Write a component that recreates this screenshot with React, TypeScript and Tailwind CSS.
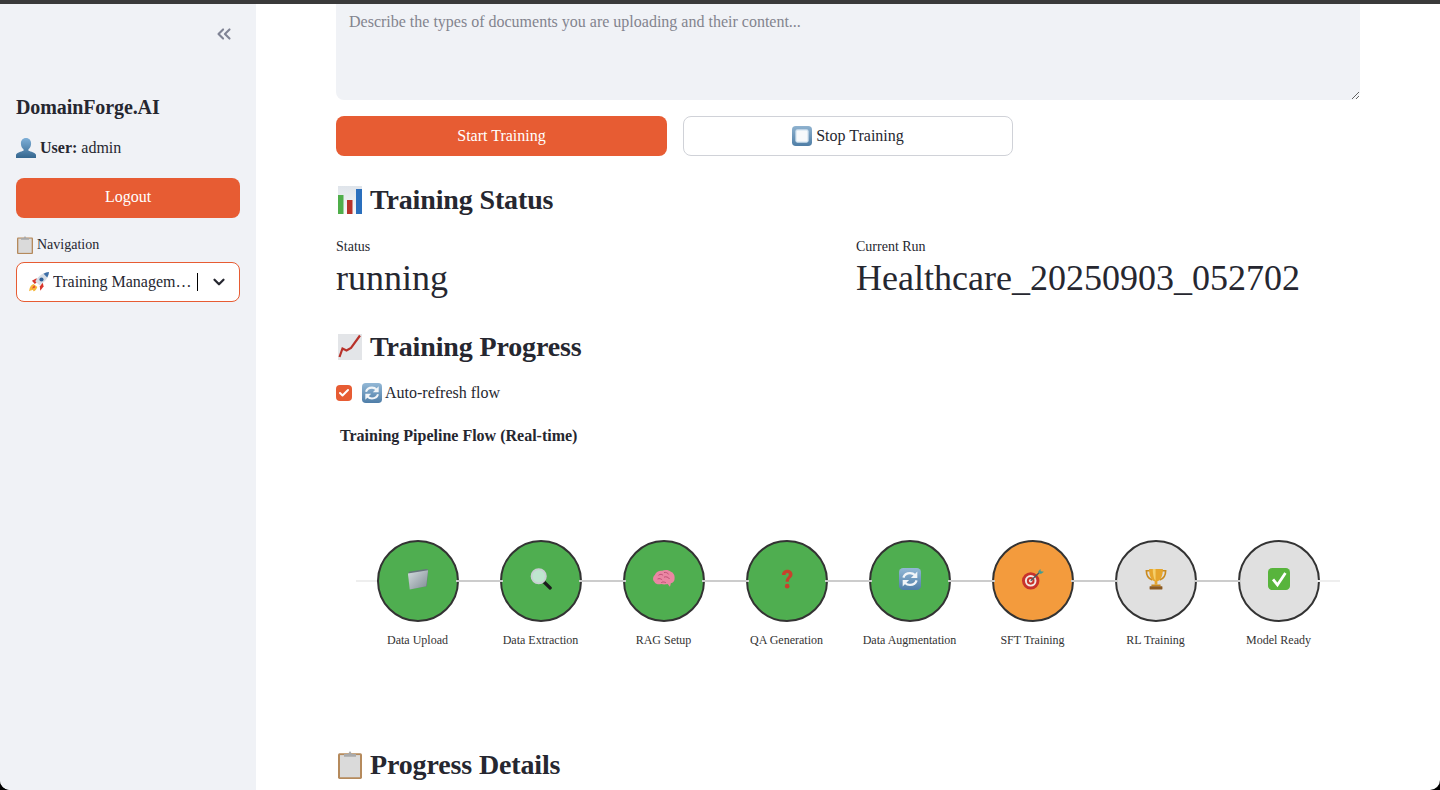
import { ChevronsLeft, ChevronDown, Check } from "lucide-react";
import type { ReactNode } from "react";

type IconProps = { className?: string };

const Bust = ({ className }: IconProps) => (
  <svg viewBox="1 1 22 22" className={className}>
    <defs><linearGradient id="bu" x1="0" y1="0" x2="0" y2="1"><stop offset="0" stopColor="#7fb0d8" /><stop offset="1" stopColor="#35678f" /></linearGradient></defs>
    <path d="M12 1c3.600 0 5.600 2.700 5.600 6 0 2.800-1.200 5.200-2.900 6.500v1.600c2.600 1 7.300 2 8.300 4.400V23H1v-3.500c1-2.400 5.700-3.400 8.300-4.400v-1.600C7.600 12.200 6.400 9.800 6.400 7c0-3.300 2-6 5.600-6z" fill="url(#bu)" />
  </svg>
);
const Clipboard = ({ className }: IconProps) => (
  <svg viewBox="0 0 24 24" preserveAspectRatio="none" className={className}>
    <rect x="0" y="2" width="24" height="22" rx="1.500" fill="#b58a5c" />
    <rect x="2" y="3.500" width="20" height="19" fill="#dadada" />
    <path d="M6 5V2.500h4L12 0l2 2.500h4V5H6z" fill="#a9a9a9" />
  </svg>
);
const Rocket = ({ className }: IconProps) => (
  <svg viewBox="0 0 24 24" className={className}>
    <path d="M5.500 14.500C3 15 1 17.500 0 23c3-1.800 4-1.200 5-1.800C4.500 24 7.500 24 10 18z" fill="#f6b73c" />
    <path d="M6.500 16c-1.200.8-2.300 2.500-2.800 4 1.600-.8 2.800-.8 3.800-1.700z" fill="#e6492d" />
    <path d="M3.500 10.500 9 7.500l1.500 3.500-3.500 3.500z" fill="#d8352b" />
    <path d="M13 17.500l3.500-5 1 5-4 5z" fill="#d8352b" />
    <path d="M24 0C17.500.5 12 4 7.500 11l5 5C19.500 12 23.500 6.500 24 0z" fill="#d5dde6" />
    <path d="M24 0c-2.300.2-4.500.9-6.500 2l4.400 4.500C23.100 4.500 23.800 2.200 24 0z" fill="#3d6fa8" />
    <circle cx="15" cy="9" r="2.500" fill="#2f5f96" />
  </svg>
);
const StopBtn = ({ className }: IconProps) => (
  <svg viewBox="0 0 24 24" className={className}>
    <defs><linearGradient id="st" x1="0" y1="0" x2="0" y2="1"><stop offset="0" stopColor="#8fb2cf" /><stop offset="1" stopColor="#4f7ea6" /></linearGradient></defs>
    <rect x="0" y="0" width="24" height="24" rx="4.500" fill="url(#st)" />
    <rect x="4" y="4" width="16" height="16" rx="2.500" fill="#cfe0ee" />
    <rect x="5.500" y="5.500" width="13" height="13" rx="1.500" fill="#f7f9fb" />
  </svg>
);
const Bars = ({ className }: IconProps) => (
  <svg viewBox="0 0 24 28" className={className}>
    <defs><linearGradient id="ba" x1="0" y1="0" x2="0" y2="1"><stop offset="0" stopColor="#dfe4ea" /><stop offset="1" stopColor="#f7f8f9" /></linearGradient></defs>
    <rect x="0" y="0" width="24" height="28" fill="url(#ba)" />
    <rect x="0" y="9" width="5.500" height="19" fill="#4fae4a" />
    <rect x="9" y="14" width="5.500" height="14" fill="#b8322a" />
    <rect x="18" y="3" width="6" height="25" fill="#2a6fbd" />
  </svg>
);
const Trend = ({ className }: IconProps) => (
  <svg viewBox="0 0 24 26" className={className}>
    <rect x="0" y="0" width="24" height="26" fill="#e3e5e8" />
    <path d="M1.500 23l3-8.500 4 2 4.500-2.500L22 1.500" fill="none" stroke="#b8322a" strokeWidth="2.200" />
  </svg>
);
const Refresh = ({ className }: IconProps) => (
  <svg viewBox="0 0 24 24" className={className}>
    <defs><linearGradient id="re" x1="0" y1="0" x2="0" y2="1"><stop offset="0" stopColor="#93b8d6" /><stop offset="1" stopColor="#4f7ea8" /></linearGradient></defs>
    <rect x="0" y="0" width="24" height="24" rx="4.500" fill="url(#re)" />
    <path d="M4.800 10.500C5.800 7.300 8.600 5.500 12 5.500c2.200 0 4 .8 5.300 2.200" fill="none" stroke="#f1f5f8" strokeWidth="2.500" />
    <path d="M20 3.800V11h-7z" fill="#f1f5f8" />
    <path d="M19.200 13.500C18.200 16.700 15.400 18.500 12 18.500c-2.200 0-4-.8-5.300-2.200" fill="none" stroke="#f1f5f8" strokeWidth="2.500" />
    <path d="M4 20.200V13h7z" fill="#f1f5f8" />
  </svg>
);
const Folder = ({ className }: IconProps) => (
  <svg viewBox="0 0 24 24" className={className}>
    <defs><linearGradient id="fo" x1="0" y1="0" x2="1" y2="1"><stop offset="0" stopColor="#d5dce0" /><stop offset="1" stopColor="#7f8c94" /></linearGradient></defs>
    <path d="M2 4l19-3 2 1-1.500 18L4 23z" fill="#66747c" />
    <path d="M1 6 23 2.500 21 20 3 23.500z" fill="url(#fo)" />
  </svg>
);
const Magnifier = ({ className }: IconProps) => (
  <svg viewBox="0 0 24 24" className={className}>
    <path d="M15 15l7 6.800" stroke="#1c1c1c" strokeWidth="3.500" strokeLinecap="round" />
    <circle cx="9.500" cy="9" r="7.800" fill="#bfe6cf" stroke="#c9cfd2" strokeWidth="2" />
  </svg>
);
const Brain = ({ className }: IconProps) => (
  <svg viewBox="0 0 24 24" className={className}>
    <path d="M1.500 15C-.5 13.500-.5 9.500 2 7.500 3.500 4 7 2.500 10 3c3-1.500 7.500-1 9.500 1 3 1 4.500 4 4 7.500.3 2.500-1.500 5-4 5l-1 4-2.500-3c-3 .8-5.500.5-7 0-2.500.8-6.500.2-7.500-2.500z" fill="#ea86a3" />
    <path d="M6 8c2-2 4-1 5 0M12 5c2-.5 4 0 5 2M5 12c2-1 4 0 5 1M12 10c2-1 5 0 6 2M9 16c1-1 3-1 5 0" fill="none" stroke="#b94a70" strokeWidth="1" />
  </svg>
);
const Question = ({ className }: IconProps) => (
  <svg viewBox="0 0 24 24" className={className}>
    <path d="M6.500 7.500C6.500 4.500 9 2 12.300 2c3.200 0 5.700 2 5.700 4.800 0 4.200-4 4.200-4 8.200h-3.500c0-5 3.500-5 3.500-8 0-1-.6-1.600-1.700-1.600-1.200 0-1.800.8-1.900 2.100z" fill="#c8412c" />
    <circle cx="12.200" cy="19.800" r="2.500" fill="#c8412c" />
  </svg>
);
const Target = ({ className }: IconProps) => (
  <svg viewBox="0 0 24 24" className={className}>
    <circle cx="9.500" cy="14" r="9.500" fill="#c8322b" />
    <circle cx="9.500" cy="14" r="6.300" fill="#f2e9e4" />
    <circle cx="9.500" cy="14" r="4.200" fill="#c8322b" />
    <circle cx="9.500" cy="14" r="2" fill="#f2e9e4" />
    <path d="M9.500 14 19 5" stroke="#4b5a60" strokeWidth="1.500" />
    <path d="M17.500 4 20 1l.5 2.500L24 4l-3.500 2.500z" fill="#3f9c94" />
  </svg>
);
const Trophy = ({ className }: IconProps) => (
  <svg viewBox="0 0 24 24" className={className}>
    <path d="M5.500 3H1.500c0 5.500 2.500 9 6.500 10M18.500 3h4c0 5.500-2.500 9-6.500 10" fill="none" stroke="#c98a1e" strokeWidth="1.800" />
    <path d="M4.500 1h15c0 7.500-2 12-6 13.500V18h-3v-3.500C6.500 13 4.500 8.500 4.500 1z" fill="#e6a52c" />
    <path d="M8.500 1h3v13c-2-2-3-7.500-3-13z" fill="#f5cf6b" />
    <rect x="7" y="18" width="10" height="2" fill="#c98a1e" />
    <rect x="5" y="20" width="14" height="3.500" rx="0.500" fill="#8b5a22" />
  </svg>
);
const CheckBox = ({ className }: IconProps) => (
  <svg viewBox="0 0 24 24" className={className}>
    <rect x="0" y="0" width="24" height="24" rx="4.500" fill="#58b43c" />
    <path d="M5.500 12.500l4.800 6L19 5.500" fill="none" stroke="#fff" strokeWidth="3" />
  </svg>
);

type Step = { label: string; icon: ReactNode; tone: string };
const cls = "h-[22px] w-[22px]";
const steps: Step[] = [
  { label: "Data Upload", icon: <Folder className={cls} />, tone: "bg-[#4fae50]" },
  { label: "Data Extraction", icon: <Magnifier className={cls} />, tone: "bg-[#4fae50]" },
  { label: "RAG Setup", icon: <Brain className={cls} />, tone: "bg-[#4fae50]" },
  { label: "QA Generation", icon: <Question className={cls} />, tone: "bg-[#4fae50]" },
  { label: "Data Augmentation", icon: <Refresh className={cls} />, tone: "bg-[#4fae50]" },
  { label: "SFT Training", icon: <Target className={cls} />, tone: "bg-[#f39b3d]" },
  { label: "RL Training", icon: <Trophy className={cls} />, tone: "bg-[#e0e0e0]" },
  { label: "Model Ready", icon: <CheckBox className={cls} />, tone: "bg-[#e0e0e0]" },
];

function Heading({ icon, children, className }: { icon: ReactNode; children: ReactNode; className?: string }) {
  return (
    <h2 className={`flex h-10 items-center gap-[8px] pl-[2px] text-[28px] font-bold leading-10 tracking-[-0.14px] text-[#262730] ${className ?? ""}`}>
      {icon}
      <span>{children}</span>
    </h2>
  );
}

export default function App() {
  return (
    <div className="h-[790px] w-[1440px] overflow-hidden bg-black font-['Liberation_Serif',serif]">
      <div className="flex h-full flex-col overflow-hidden rounded-b-[10px] bg-white">
        <div className="h-1 shrink-0 bg-[#3a3a3a]" />
        <div className="flex min-h-0 flex-1">
          <aside className="w-64 shrink-0 bg-[#f0f2f6] px-4 text-[#262730]">
            <div className="flex h-[60px] justify-end pr-[5px] pt-[19px]">
              <ChevronsLeft className="h-[22px] w-[22px] text-[#808495]" strokeWidth={2.3} />
            </div>
            <div className="mt-[31px] text-[20px] font-bold leading-[24px] tracking-[-0.1px]">DomainForge.AI</div>
            <div className="mt-[17px] flex h-6 items-center gap-[4px] text-base">
              <Bust className="h-[20px] w-[20px]" />
              <span><b>User:</b> admin</span>
            </div>
            <button className="mt-[18px] h-10 w-full rounded-lg bg-[#e75c33] pb-[2px] text-base text-white">Logout</button>
            <div className="mt-[17px] flex h-5 items-center gap-[4px] text-sm">
              <Clipboard className="ml-px h-[18px] w-4" />
              <span>Navigation</span>
            </div>
            <div className="mt-[7px] flex h-10 items-center rounded-lg border border-[#e75c33] bg-white pl-[12px] pr-[11px] text-base">
              <Rocket className="h-[20px] w-[20px] shrink-0" />
              <span className="ml-[4px] w-[140px] truncate whitespace-nowrap">Training Management</span>
              <span className="ml-[4px] h-[18px] w-px bg-black" />
              <ChevronDown className="ml-auto h-[18px] w-[18px] text-[#262730]" strokeWidth={3} />
            </div>
          </aside>
          <main className="flex-1 px-20 text-[#262730]">
            <textarea
              readOnly
              placeholder="Describe the types of documents you are uploading and their content..."
              className="block h-24 w-full rounded-b-lg bg-[#f0f2f6] px-[13px] pt-[8px] text-base leading-5 outline-none placeholder:text-[#83848e]"
            />
            <div className="mt-4 flex gap-4">
              <button className="h-10 w-[331px] rounded-lg bg-[#e75c33] text-base text-white">Start Training</button>
              <button className="flex h-10 w-[330px] items-center justify-center gap-[4px] rounded-lg border border-[#d0d2d8] bg-white text-base">
                <StopBtn className="h-5 w-5" />
                Stop Training
              </button>
            </div>
            <Heading icon={<Bars className="h-7 w-6" />} className="mt-6">Training Status</Heading>
            <div className="mt-[17px] grid grid-cols-2 gap-4">
              <div>
                <div className="text-sm leading-5">Status</div>
                <div className="text-[36px] leading-[42px]">running</div>
              </div>
              <div>
                <div className="text-sm leading-5">Current Run</div>
                <div className="text-[36px] leading-[42px]">Healthcare_20250903_052702</div>
              </div>
            </div>
            <Heading icon={<Trend className="h-[26px] w-6" />} className="mt-[28px]">Training Progress</Heading>
            <div className="mt-[14px] flex h-6 items-center text-base">
              <span className="flex h-4 w-4 items-center justify-center rounded bg-[#e75c33] text-white">
                <Check className="h-3 w-3" strokeWidth={4} />
              </span>
              <Refresh className="ml-[10px] h-5 w-5" />
              <span className="ml-[3px]">Auto-refresh flow</span>
            </div>
            <div className="ml-1 mt-[21px] text-base font-bold leading-5">Training Pipeline Flow (Real-time)</div>
            <div className="mx-5 mt-[94px] grid grid-cols-8">
              {steps.map((s, i) => (
                <div key={s.label} className="flex flex-col items-center">
                  <div className="flex w-full items-center">
                    <div className={`-mr-[3px] h-0.5 flex-1 ${i === 0 ? "bg-[#eeeeee]" : "relative z-10 bg-[#cccccc]"}`} />
                    <div className={`flex h-[82px] w-[82px] shrink-0 items-center justify-center rounded-full border-2 border-[#333333] pb-[4px] ${s.tone}`}>
                      {s.icon}
                    </div>
                    <div className={`-ml-[3px] h-0.5 flex-1 ${i === 7 ? "bg-[#eeeeee]" : "relative z-10 bg-[#cccccc]"}`} />
                  </div>
                  <div className="mt-[10px] text-xs leading-4 text-[#333333]">{s.label}</div>
                </div>
              ))}
            </div>
            <Heading icon={<Clipboard className="h-7 w-6" />} className="mt-[97px]">Progress Details</Heading>
          </main>
        </div>
      </div>
    </div>
  );
}
